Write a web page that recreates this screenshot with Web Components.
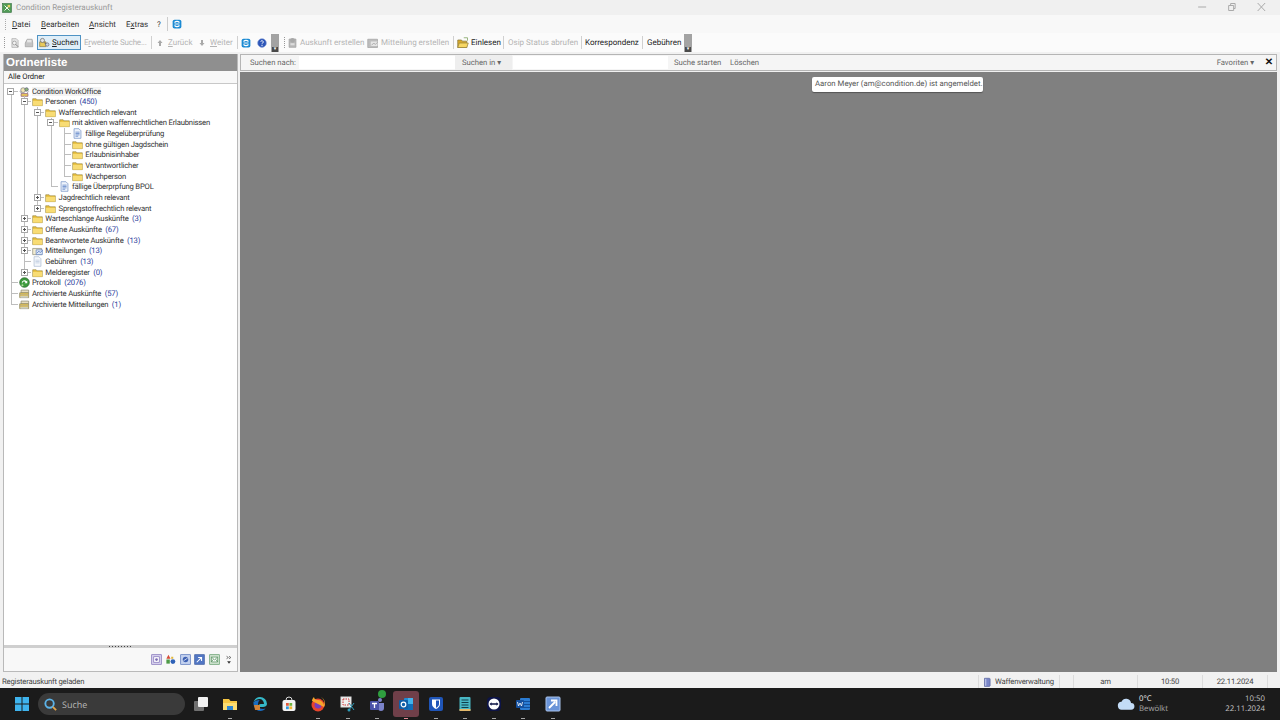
<!DOCTYPE html>
<html lang="de">
<head>
<meta charset="utf-8">
<title>Condition Registerauskunft</title>
<style>
  html, body { margin: 0; height: 720px; overflow: hidden; }
  body {
    display: flex; flex-direction: column; background: #f1f1f1; color: #333;
    font: 7.7px Roboto, "Open Sans", sans-serif;
    text-rendering: geometricPrecision;
  }
</style>
</head>
<body>
<title-bar>Condition Registerauskunft</title-bar>
<menu-bar></menu-bar>
<tool-bar></tool-bar>
<main-area></main-area>
<status-bar></status-bar>
<task-bar></task-bar>

<script>
(function () {
  const folder = `<path d="M1 4h5l1 1.500h8V14H1z" fill="#e8bf3c" stroke="#8a7a3c" stroke-width=".8"/><path d="M1.500 7h13.500v7H1.500z" fill="#f8dc74"/>`;
  const ICONS = {
    folder,
    app: `<rect x="1" y="1" width="14" height="14" fill="#4f9a55" stroke="#2f6f3a"/><path d="M4 4l8 8M12 4l-8 8" stroke="#fff" stroke-width="1.500"/><path d="M9 3h4v4H9z" fill="#e8d26a"/>`,
    doc: `<path d="M3 1h7l3 3v11H3z" fill="#eef3fb" stroke="#6f8fc4"/><path d="M5 6h6M5 8h6M5 10h6M5 12h4" stroke="#4a74c0"/>`,
    plain: `<path d="M3 1h7l3 3v11H3z" fill="#f4f7fb" stroke="#a9b9d0"/><path d="M5 6h6M5 8h6M5 10h6" stroke="#b7c6dc"/>`,
    mail: `<path d="M1 5h13v9H1z" fill="#f3ecd0" stroke="#8b8b7a"/><path d="M6 7h9v7H6z" fill="#dfe8f7" stroke="#5d7fbd"/><path d="M7 12l3-3 2 2 3-3" stroke="#3d66b5" fill="none"/>`,
    root: `<circle cx="6" cy="6" r="3.500" fill="#f1e7b6" stroke="#777"/><circle cx="11" cy="5" r="2.500" fill="#8fb878" stroke="#557"/><path d="M3 11h10v4H3z" fill="#e8c95a" stroke="#857"/><path d="M1 8l3 2M14 8l-2 2" stroke="#667"/>`,
    proto: `<circle cx="8" cy="8" r="7" fill="#3c9a3c" stroke="#26622a"/><path d="M4 9a4 4 0 0 1 7-3l1-1v4H8l1.500-1.500A2.500 2.500 0 0 0 5 9z" fill="#fff"/><circle cx="5" cy="12" r="1.500" fill="#b6e0a0"/>`,
    archive: `<path d="M3 3h11v4H3z" fill="#e7dfc3" stroke="#88846e"/><path d="M1 7h13v7H1z" fill="#e8c95a" stroke="#857f5a"/><path d="M1 10h13" stroke="#9a9a9a"/><path d="M2 12h11v2H2z" fill="#c9d0d8"/>`,
    preview: `<path d="M3 1h7l3 3v11H3z" fill="#e4e4e4" stroke="#a2a2a2"/><circle cx="7" cy="8" r="3" fill="#f4f4f4" stroke="#8a8a8a"/><path d="M9 10l4 4" stroke="#777" stroke-width="1.500"/>`,
    print: `<path d="M2 8l3-6h8l1 6v6H2z" fill="#c4c4c4" stroke="#999"/><path d="M5 3h7v4H5z" fill="#e7e7e7"/>`,
    search: `<path d="M1 7h9v7H1z" fill="#e8c95a" stroke="#8a7a3c"/><circle cx="5" cy="5" r="3" fill="#e3e3e3" stroke="#666"/><path d="M8 8l3 3" stroke="#555" stroke-width="1.500"/><circle cx="12" cy="11" r="2.500" fill="#c9d3df" stroke="#667"/>`,
    up: `<path d="M8 2l5 6h-3v6H6V8H3z" fill="#a9a9a9"/>`,
    down: `<path d="M8 14l5-6h-3V2H6v6H3z" fill="#a9a9a9"/>`,
    tv: `<rect x="1" y="1" width="14" height="14" rx="3" fill="#1b8ad3"/><path d="M4 5.500A6 6 0 0 1 12 5.500M4 10.500A6 6 0 0 0 12 10.500" stroke="#fff" stroke-width="2" fill="none"/><path d="M4 8h8" stroke="#fff" stroke-width="1.500"/>`,
    help: `<circle cx="8" cy="8" r="7" fill="#2d56b8" stroke="#8aa2d8"/><path d="M6 6a2 2 0 1 1 3 2c-1 .5-1 1-1 2" stroke="#fff" stroke-width="1.500" fill="none"/><circle cx="8" cy="12" r="1" fill="#fff"/>`,
    report: `<path d="M3 3h10v12H3z" fill="#b9b9b9" stroke="#a0a0a0"/><circle cx="8" cy="5" r="3.500" fill="#a8a8a8"/><path d="M5 9h6v3H5z" fill="#dcdcdc"/>`,
    message: `<path d="M1 3h13v11H1z" fill="#bdbdbd" stroke="#a4a4a4"/><path d="M5 6h9v6H5z" fill="#e6e6e6"/><path d="M6 11l3-3 2 2 3-3" stroke="#999" fill="none"/>`,
    open: `<path d="M1 4h5l1 1.500h6V14H1z" fill="#d9a928" stroke="#8a7a3c"/><path d="M3 8h12l-2 6H1z" fill="#f7d764" stroke="#9a853c"/><path d="M9 1h5v4" stroke="#7a9f58" fill="none"/>`,
    disk: `<path d="M4 2h8l1 1v11l-1 1H4z" fill="#7a86c8" stroke="#4f5a96"/><path d="M6 3v11" stroke="#cdd3f0" stroke-width="1.500"/>`,
    b1: `<rect x="1" y="1" width="14" height="14" fill="#d8d2ee" stroke="#7d6db5"/><rect x="4" y="4" width="8" height="8" fill="#fff" stroke="#7d6db5"/><circle cx="8" cy="8" r="2" fill="#7d6db5"/>`,
    b2: `<path d="M5 1l3 6H2z" fill="#d64b36"/><rect x="2" y="8" width="5" height="6" fill="#4f9a48"/><circle cx="11.500" cy="11" r="3.500" fill="#2f62b8"/><path d="M9 4h3v3H9z" fill="#e2b93c"/>`,
    b3: `<rect x="1" y="1" width="14" height="14" fill="#c4d2ef" stroke="#4f6fb8"/><circle cx="8" cy="8" r="4" fill="#3f62b3"/><path d="M5 10l6-4" stroke="#fff"/>`,
    b4: `<rect x="1" y="1" width="14" height="14" fill="#5277c4" stroke="#3c5aa0"/><path d="M4 12l6-6M6 5h5v5" stroke="#fff" stroke-width="1.500" fill="none"/>`,
    b5: `<rect x="1" y="1" width="14" height="14" fill="#cfe3cf" stroke="#5d9a66"/><path d="M3.500 4.500h9v7h-9z" fill="#fff" stroke="#4d8a56"/><path d="M3.500 4.500l4.500 4 4.500-4M3.500 11.500l3-4M12.500 11.500l-3-4" stroke="#4d8a56" fill="none"/>`,
    chev: `<path d="M4 2l3 2-3 2M8 2l3 2-3 2" fill="none" stroke="#333"/><path d="M5 10h6l-3 4z" fill="#333"/>`,
    win: `<path d="M1 1h6.500v6.500H1zM8.500 1H15v6.500H8.500zM1 8.500h6.500V15H1zM8.500 8.500H15V15H8.500z" fill="#3fb4ee"/>`,
    lens: `<circle cx="7" cy="7" r="4.500" fill="none" stroke="#5cb3e8" stroke-width="2"/><path d="M10.500 10.500l3.500 3.500" stroke="#e0a24a" stroke-width="2"/>`,
    taskview: `<rect x="1" y="5" width="10" height="10" rx="1" fill="#707070"/><rect x="5" y="1" width="10" height="10" rx="1" fill="#f1f1f1"/>`,
    explorer: `<path d="M1 3h6l1.500 2H15v9H1z" fill="#f5c542"/><path d="M1 7h14v7H1z" fill="#fbdc71"/><path d="M5 10h6v4H5z" fill="#2f86d0"/>`,
    edge: `<path d="M8 1a7 7 0 0 1 7 7c0 2-2 3-4 3H6c0-2 1-3 3-3h3C12 5 10 3 7.500 3 5 3 2.500 5 1.500 6 2.500 3 5 1 8 1z" fill="#35b8c8"/><path d="M1.500 6C1 10 3.500 15 8.500 15c2 0 4-1 5-2.500-3 1-7 .5-7.500-4C6 6 7 4.500 8 4 5 4 2.500 5 1.500 6z" fill="#1a6cc0"/><path d="M2 9h6v5H3z" fill="#e8862a" opacity=".9"/>`,
    store: `<path d="M5 4a3 3 0 0 1 6 0" fill="none" stroke="#dcdcdc"/><rect x="1.500" y="4" width="13" height="11" rx="2" fill="#f4f4f4"/><path d="M5 7h2.800v2.800H5z" fill="#e25a3c"/><path d="M8.400 7h2.800v2.800H8.400z" fill="#6eb43f"/><path d="M5 10.400h2.800v2.800H5z" fill="#2f9ae0"/><path d="M8.400 10.400h2.800v2.800H8.400z" fill="#f2b632"/>`,
    firefox: `<circle cx="8" cy="9" r="6.500" fill="#e8452c"/><circle cx="8" cy="9" r="3.500" fill="#7a3fb8"/><path d="M2 5c0-2 1-3 2-4 0 2 2 3 4 3 3 0 5 2 6 5 1-3 0-6-3-8 4 2 5 7 3 10L8 8z" fill="#f7a52c"/>`,
    snip: `<rect x="1" y="1" width="10" height="10" fill="#f1f1f1" stroke="#ddd"/><path d="M3 3h6v6H3z" fill="none" stroke="#c33" stroke-dasharray="1.500 1"/><path d="M9 7l5 7M14 7l-5 7" stroke="#2c9bb8"/><circle cx="9" cy="14" r="1.500" fill="#2c9bb8"/>`,
    teams: `<circle cx="11" cy="4" r="2" fill="#7b83c9"/><path d="M8 7h7v5a3 3 0 0 1-6 0z" fill="#7b83c9"/><rect x="1" y="5" width="9" height="9" rx="1" fill="#4b53a8"/><path d="M3 7.500h5M5.500 7.500V12" stroke="#fff" stroke-width="1.300"/>`,
    outlook: `<rect x="6" y="2" width="9" height="12" rx="1" fill="#1d8ad6"/><path d="M10 2h5v6h-5z" fill="#41b2ec"/><path d="M6 8h9v6H6z" fill="#0f6cb8"/><rect x="1" y="4" width="9" height="9" rx="1" fill="#0f5ea8"/><circle cx="5.500" cy="8.500" r="2.300" fill="none" stroke="#fff" stroke-width="1.200"/>`,
    bitwarden: `<rect x="1" y="1" width="14" height="14" rx="2" fill="#1f55b8"/><path d="M4 3.500h8V8c0 2.500-2 4-4 5-2-1-4-2.500-4-5z" fill="#fff"/><path d="M8 4.500h3V8c0 2-1.500 3-3 3.800z" fill="#1f55b8"/>`,
    notepad: `<rect x="2.500" y="1" width="11" height="14" rx="1" fill="#49b7c4"/><path d="M4.500 4h7M4.500 6.500h7M4.500 9h7M4.500 11.500h7" stroke="#123d4a"/><path d="M2.500 13h11v2h-11z" fill="#e2b86c"/>`,
    teamviewer: `<rect x="1" y="1" width="14" height="14" rx="4" fill="#0d1446"/><circle cx="8" cy="8" r="5.500" fill="#fff"/><path d="M3.500 8l2-1.800v1h5v-1l2 1.800-2 1.800v-1h-5v1z" fill="#0d1446"/>`,
    word: `<rect x="5" y="2" width="10" height="12" rx="1" fill="#2b7cd3"/><path d="M5 5.500h10M5 8.500h10M5 11.500h10" stroke="#134f9a"/><rect x="1" y="4" width="8" height="8" rx="1" fill="#14509f"/><path d="M2.500 6l1 4 1.500-3 1.500 3 1-4" stroke="#fff" fill="none" stroke-width=".8"/>`,
    remote: `<rect x="1" y="1" width="14" height="14" rx="1" fill="#6a94d8" stroke="#aac4ec"/><path d="M4 12l6-6M6 4.500h5.500V10" stroke="#fff" stroke-width="1.800" fill="none"/>`,
    cloud: `<path d="M4.500 13a3.500 3.500 0 0 1-.5-7 4.500 4.500 0 0 1 8.500 1 3 3 0 0 1 0 6z" fill="#c3dcf7"/>`
  };

  class AppIcon extends HTMLElement {
    connectedCallback() {
      if (this.shadowRoot) return;
      const size = this.getAttribute("size") || 10;
      const shadow = this.attachShadow({ mode: "open" });
      shadow.innerHTML = `
        <style>
          :host { display: inline-flex; flex: none; width: ${size}px; height: ${size}px; }
          svg { display: block; width: 100%; height: 100%; }
        </style>
        <svg viewBox="0 0 16 16">${ICONS[this.getAttribute("name")] || ""}</svg>`;
    }
  }

  class TitleBar extends HTMLElement {
    constructor() {
      super();
      this.attachShadow({ mode: "open" }).innerHTML = `
        <style>
          :host { display: flex; align-items: center; flex: none; height: 15px; padding-left: 2px; background: #f0f0f0; color: #9a9a9a; font-size: 8px; }
          span { margin-left: 4px; flex: 1; }
          .ctl { display: flex; }
          .ctl svg { width: 29.300px; height: 10px; margin-top: -1px; }
        </style>
        <app-icon name="app" size="10"></app-icon>
        <span><slot></slot></span>
        <div class="ctl">
          <svg viewBox="0 0 29 10"><path d="M10 5h8" stroke="#aaa"/></svg>
          <svg viewBox="0 0 29 10"><path d="M11.500 3.500h5v5h-5zM13.500 3.500v-2h4.500v5h-1.500" fill="none" stroke="#aaa"/></svg>
          <svg viewBox="0 0 29 10" style="margin-right:4px"><path d="M10.500 1l7.500 8M18 1l-7.500 8" stroke="#aaa"/></svg>
        </div>`;
    }
  }

  class MenuBar extends HTMLElement {
    constructor() {
      super();
      this.attachShadow({ mode: "open" }).innerHTML = `
        <style>
          :host { display: flex; align-items: center; flex: none; height: 18px; padding-left: 5px; background: #f8f8f8; color: #333; font-size: 8px; }
          i { width: 1px; height: 11px; margin-right: 6px; border-left: 1px dotted #aaa; box-sizing: border-box; }
          span { display: block; }
          u { text-decoration-thickness: 1px; }
          .sep { width: 1px; height: 14px; background: #ccc; margin: 0 4px; }
        </style>
        <i></i>
        <span style="width:29px"><u>D</u>atei</span>
        <span style="width:48px"><u>B</u>earbeiten</span>
        <span style="width:37px"><u>A</u>nsicht</span>
        <span style="width:31px">E<u>x</u>tras</span>
        <span style="width:6px">?</span>
        <div class="sep"></div>
        <app-icon name="tv" size="10"></app-icon>`;
    }
  }

  class ToolBtn extends HTMLElement {
    connectedCallback() {
      if (this.shadowRoot) return;
      const icon = this.getAttribute("icon");
      const shadow = this.attachShadow({ mode: "open" });
      shadow.innerHTML = `
        <style>
          :host { display: flex; align-items: center; flex: none; height: 15px; white-space: nowrap; color: #b4b4b4; font-size: 8px; }
          :host([on]) { color: #222; }
          :host([active]) { box-sizing: border-box; padding-left: 2px; color: #222; background: #dfeef8; outline: 1px solid #4f93c4; outline-offset: -1px; }
          app-icon { margin-right: 2px; }
        </style>
        ${icon ? `<app-icon name="${icon}" size="${this.getAttribute("size") || 10}"></app-icon>` : ""}
        <slot></slot>`;
    }
  }

  class ToolBar extends HTMLElement {
    constructor() {
      super();
      this.attachShadow({ mode: "open" }).innerHTML = `
        <style>
          :host { display: flex; align-items: center; flex: none; height: 19px; background: #fbfbfb; padding-left: 4px; box-sizing: border-box; }
          i { flex: none; width: 0; height: 11px; border-left: 1px dotted #999; }
          b { flex: none; width: 1px; height: 13px; background: #d0d0d0; }
          .more { flex: none; display: flex; align-items: flex-end; justify-content: center; width: 8px; height: 18px; background: #a3a3a3; }
          .more span { width: 6px; height: 5px; background: #4a4a4a; color: #fff; font-size: 5px; line-height: 5px; text-align: center; }
        </style>
        <i></i>
        <tool-btn icon="preview" style="margin-left:5px;width:14px"></tool-btn>
        <tool-btn icon="print" style="width:13px"></tool-btn>
        <tool-btn icon="search" size="11" active style="width:44px"><u>S</u>uchen</tool-btn>
        <tool-btn style="margin-left:3px;width:64px;letter-spacing:-.2px">E<u>r</u>weiterte Suche...</tool-btn>
        <b style="margin:0 3px"></b>
        <tool-btn icon="up" size="8" style="margin-left:1px;width:39px"><span style="margin-left:2px"><u>Z</u>urück</span></tool-btn>
        <tool-btn icon="down" size="8" style="margin-left:3px;width:35px"><span style="margin-left:2px"><u>W</u>eiter</span></tool-btn>
        <b style="margin:0 3px 0 4px"></b>
        <tool-btn icon="tv" style="width:16px"></tool-btn>
        <tool-btn icon="help" style="width:14px"></tool-btn>
        <div class="more"><span>▾</span></div>
        <i style="margin-left:5px"></i>
        <tool-btn icon="report" size="11" style="margin-left:2px;width:78px">Auskunft erstellen</tool-btn>
        <tool-btn icon="message" size="12" style="margin-left:2px;width:84px">Mitteilung erstellen</tool-btn>
        <b style="margin:0 3px 0 2px"></b>
        <tool-btn icon="open" size="12" on style="width:44px">Einlesen</tool-btn>
        <b style="margin:0 4px 0 2px"></b>
        <tool-btn style="width:72px">Osip Status abrufen</tool-btn>
        <b style="margin:0 3px 0 1px"></b>
        <tool-btn on style="width:57px">Korrespondenz</tool-btn>
        <b style="margin-right:4px"></b>
        <tool-btn on style="width:37px">Gebühren</tool-btn>
        <div class="more"><span>▾</span></div>`;
    }
  }

  const TREE = [
    { label: "Condition WorkOffice", icon: "root", hi: true, open: true, children: [
      { label: "Personen", count: 450, icon: "folder", open: true, children: [
        { label: "Waffenrechtlich relevant", icon: "folder", open: true, children: [
          { label: "mit aktiven waffenrechtlichen Erlaubnissen", icon: "folder", open: true, children: [
            { label: "fällige Regelüberprüfung", icon: "doc" },
            { label: "ohne gültigen Jagdschein", icon: "folder" },
            { label: "Erlaubnisinhaber", icon: "folder" },
            { label: "Verantwortlicher", icon: "folder" },
            { label: "Wachperson", icon: "folder" }
          ] },
          { label: "fällige Überprpfung BPOL", icon: "doc" }
        ] },
        { label: "Jagdrechtlich relevant", icon: "folder", closed: true },
        { label: "Sprengstoffrechtlich relevant", icon: "folder", closed: true }
      ] },
      { label: "Warteschlange Auskünfte", count: 3, icon: "folder", closed: true },
      { label: "Offene Auskünfte", count: 67, icon: "folder", closed: true },
      { label: "Beantwortete Auskünfte", count: 13, icon: "folder", closed: true },
      { label: "Mitteilungen", count: 13, icon: "mail", closed: true },
      { label: "Gebühren", count: 13, icon: "plain" },
      { label: "Melderegister", count: 0, icon: "folder", closed: true }
    ] },
    { label: "Protokoll", count: 2076, icon: "proto" },
    { label: "Archivierte Auskünfte", count: 57, icon: "archive" },
    { label: "Archivierte Mitteilungen", count: 1, icon: "archive" }
  ];

  class FolderTree extends HTMLElement {
    constructor() {
      super();
      const rows = [];
      // prefix holds one flag per ancestor level: does its line carry on below
      const walk = (nodes, prefix, top) => {
        nodes.forEach((node, i) => {
          const last = i === nodes.length - 1;
          const guides = prefix.map((on) => `<span class="c ${on ? "v" : ""}"></span>`).join("");
          const kind = top && i === 0 ? "first" : last ? "elbow" : "tee";
          const box = node.open ? `<em class="minus"></em>` : node.closed ? `<em class="plus"></em>` : "";
          const count = node.count !== undefined ? `<span class="n">(${node.count})</span>` : "";
          rows.push(`<div class="r">${guides}<span class="c ${kind}">${box}</span>
            <span class="c ic"><app-icon name="${node.icon}" size="11"></app-icon></span>
            <span class="t ${node.hi ? "hi" : ""}">${node.label}</span>${count}</div>`);
          if (node.children) walk(node.children, prefix.concat(!last), false);
        });
      };
      walk(TREE, [], true);
      this.attachShadow({ mode: "open" }).innerHTML = `
        <style>
          :host { display: block; flex: 1; background: #fff; padding: 1.700px 0 0 .800px; overflow: hidden; letter-spacing: -.2px; --l: #bdbdbd; }
          .r { display: flex; align-items: center; height: 10.670px; white-space: nowrap; }
          .c { flex: none; display: flex; align-items: center; justify-content: center; width: 13.330px; height: 100%; background-repeat: no-repeat; }
          .ic app-icon { margin-left: -1px; }
          .v { background-image: linear-gradient(var(--l), var(--l)); background-size: 1px 100%; background-position: 6px 0; }
          .tee { background-image: linear-gradient(var(--l), var(--l)), linear-gradient(var(--l), var(--l)); background-size: 1px 100%, 7px 1px; background-position: 6px 0, 6px 50%; }
          .elbow { background-image: linear-gradient(var(--l), var(--l)), linear-gradient(var(--l), var(--l)); background-size: 1px 50%, 7px 1px; background-position: 6px 0, 6px 50%; }
          .first { background-image: linear-gradient(var(--l), var(--l)), linear-gradient(var(--l), var(--l)); background-size: 1px 50%, 7px 1px; background-position: 6px 100%, 6px 50%; }
          em { display: block; box-sizing: border-box; width: 7px; height: 7px; margin-left: -1px; border: 1px solid #a8a8a8; background-color: #fff; background-repeat: no-repeat; background-image: linear-gradient(#555, #555); background-size: 3px 1px; background-position: center; }
          em.plus { background-image: linear-gradient(#555, #555), linear-gradient(#555, #555); background-size: 3px 1px, 1px 3px; }
          .t { margin-left: .500px; color: #333; }
          .hi { background: #f4f4f4; }
          .n { margin-left: 3.500px; color: #2f3f9e; }
        </style>
        ${rows.join("")}`;
    }
  }

  class FolderPanel extends HTMLElement {
    constructor() {
      super();
      this.attachShadow({ mode: "open" }).innerHTML = `
        <style>
          :host { display: flex; flex-direction: column; flex: none; width: 235px; box-sizing: border-box; border: 1px solid #b9b9b9; border-top: 0; }
          h2 { margin: 0; height: 17px; padding-left: 2px; background: #8f8f8f; color: #fff; font: bold 11.500px/18px "Liberation Sans", sans-serif; }
          .all { height: 12px; line-height: 12px; padding-left: 4px; background: #f8f8f8; border-bottom: 1px solid #c8c8c8; color: #222; letter-spacing: -.1px; }
          .grip { display: flex; justify-content: center; align-items: center; height: 3px; background: #cfcfcf; }
          .grip span { width: 23px; height: 1px; background: repeating-linear-gradient(90deg, #444 0 1px, transparent 1px 3px); }
          .foot { display: flex; align-items: center; justify-content: flex-end; height: 23px; gap: 3.500px; background: #f8f8f8; padding-right: 3px; }
        </style>
        <h2>Ordnerliste</h2>
        <div class="all">Alle Ordner</div>
        <folder-tree></folder-tree>
        <div class="grip"><span></span></div>
        <div class="foot">
          <app-icon name="b1" size="11"></app-icon>
          <app-icon name="b2" size="11"></app-icon>
          <app-icon name="b3" size="11"></app-icon>
          <app-icon name="b4" size="11"></app-icon>
          <app-icon name="b5" size="11"></app-icon>
          <app-icon name="chev" size="10" style="margin-left:1px"></app-icon>
        </div>`;
    }
  }

  class SearchBar extends HTMLElement {
    constructor() {
      super();
      this.attachShadow({ mode: "open" }).innerHTML = `
        <style>
          :host { display: flex; align-items: center; flex: none; height: 17px; box-sizing: border-box; border: 1px solid #b5b5b5; background: #f5f5f5; color: #666; white-space: nowrap; font-size: 7.700px; }
          .box { flex: none; height: 13px; background: #fff; }
          span { flex: none; }
          .in { width: 57px; height: 15px; line-height: 15px; text-align: center; background: #eeeeee; box-sizing: border-box; padding-right: 4px; }
          .x { width: 14px; text-align: center; color: #111; font: bold 10px "Liberation Sans", sans-serif; }
        </style>
        <span style="margin-left:9px;width:49px">Suchen nach:</span>
        <div class="box" style="width:156px"></div>
        <span class="in">Suchen in ▾</span>
        <div class="box" style="margin-left:1px;width:155px"></div>
        <span style="margin-left:6px;width:56px">Suche starten</span>
        <span>Löschen</span>
        <span style="margin-left:auto">Favoriten ▾</span>
        <span class="x" style="margin-left:8px">✕</span>`;
    }
  }

  class WorkPane extends HTMLElement {
    constructor() {
      super();
      this.attachShadow({ mode: "open" }).innerHTML = `
        <style>
          :host { display: flex; flex-direction: column; flex: 1; gap: 1px; min-width: 0; }
          .canvas { position: relative; flex: 1; background: #808080; }
          .tip { position: absolute; left: 572px; top: 5px; height: 15px; width: 171px; box-sizing: border-box; padding-left: 3px; line-height: 14px; background: #fff; border-radius: 2px; color: #555; font-size: 7.800px; white-space: nowrap; box-shadow: 0 1px 1px #555; }
        </style>
        <search-bar></search-bar>
        <div class="canvas"><div class="tip">Aaron Meyer (am@condition.de) ist angemeldet.</div></div>`;
    }
  }

  class MainArea extends HTMLElement {
    constructor() {
      super();
      this.attachShadow({ mode: "open" }).innerHTML = `
        <style>
          :host { display: flex; flex: none; height: 618px; margin-top: 2px; padding: 0 3px; gap: 2px; box-sizing: border-box; }
        </style>
        <folder-panel></folder-panel>
        <work-pane></work-pane>`;
    }
  }

  class StatusBar extends HTMLElement {
    constructor() {
      super();
      this.attachShadow({ mode: "open" }).innerHTML = `
        <style>
          :host { display: flex; align-items: center; flex: none; box-sizing: border-box; height: 16px; padding: 3px 0 0 2px; background: #f1f1f1; color: #444; white-space: nowrap; font-size: 7.700px; letter-spacing: -.2px; }
          .msg { flex: 1; }
          .cell { display: flex; align-items: center; justify-content: center; height: 100%; box-sizing: border-box; border-left: 1px solid #dcdcdc; }
        </style>
        <span class="msg">Registerauskunft geladen</span>
        <div class="cell" style="width:81px;gap:3px;justify-content:flex-start;padding-left:3px"><app-icon name="disk" size="10"></app-icon>Waffenverwaltung</div>
        <div class="cell" style="width:14px"></div>
        <div class="cell" style="width:64px">am</div>
        <div class="cell" style="width:65px">10:50</div>
        <div class="cell" style="width:65px">22.11.2024</div>
        <div class="cell" style="width:13px"></div>`;
    }
  }

  class TaskApp extends HTMLElement {
    connectedCallback() {
      if (this.shadowRoot) return;
      const shadow = this.attachShadow({ mode: "open" });
      shadow.innerHTML = `
        <style>
          :host { display: flex; flex-direction: column; align-items: center; flex: none; width: 29.300px; height: 32px; box-sizing: border-box; }
          .tile { display: flex; align-items: center; justify-content: center; width: 26px; height: 26px; margin-top: 3px; border-radius: 3px; }
          :host([active]) .tile { background: #6f3f49; }
          .dot { width: 4px; height: 1px; margin-top: 1px; }
          :host([run]) .dot { background: #a8a8a8; }
          :host([active]) .dot { background: #e58a96; }
        </style>
        <div class="tile"><app-icon name="${this.getAttribute("name")}" size="16"></app-icon></div>
        <div class="dot"></div>`;
    }
  }

  class TaskBar extends HTMLElement {
    constructor() {
      super();
      const apps = [
        ["taskview", ""], ["explorer", "run"], ["edge", ""], ["store", ""], ["firefox", "run"],
        ["snip", "run"], ["teams", "run"], ["outlook", "active"], ["bitwarden", "run"],
        ["notepad", "run"], ["teamviewer", "run"], ["word", "run"], ["remote", "run"]
      ];
      this.attachShadow({ mode: "open" }).innerHTML = `
        <style>
          :host { display: flex; align-items: center; flex: none; height: 32px; background: #1b1b1b; color: #ccc; white-space: nowrap; font: 7.800px "Open Sans", sans-serif; }
          .start { margin-left: 14px; }
          .search { display: flex; align-items: center; box-sizing: border-box; width: 147px; height: 22px; margin-left: 8px; padding-left: 5px; gap: 4px; border-radius: 11px; background: #3a3a3a; font-size: 9px; color: #b9b9b9; }
          .apps { display: flex; margin-left: 1.500px; }
          .badge { position: relative; }
          .badge::after { content: ""; position: absolute; left: 16px; top: 2px; width: 8px; height: 8px; border-radius: 50%; background: #2f9e3f; }
          .weather { display: flex; align-items: center; gap: 4px; margin-left: auto; }
          .lines { line-height: 10px; }
          .lines b { display: block; font-weight: 400; color: #eee; }
          .lines span { color: #a9a9a9; }
          .clock { width: 60px; margin: 0 15px 0 37px; text-align: right; line-height: 10px; color: #c4c4c4; }
        </style>
        <app-icon class="start" name="win" size="16"></app-icon>
        <div class="search"><app-icon name="lens" size="15"></app-icon>Suche</div>
        <div class="apps">
          ${apps.map(([n, s]) => `<task-app name="${n}" ${s} ${n === "teams" ? 'class="badge"' : ""}></task-app>`).join("")}
        </div>
        <div class="weather">
          <app-icon name="cloud" size="18"></app-icon>
          <div class="lines"><b>0°C</b><span>Bewölkt</span></div>
        </div>
        <div class="clock">10:50<br>22.11.2024</div>`;
    }
  }

  customElements.define("app-icon", AppIcon);
  customElements.define("title-bar", TitleBar);
  customElements.define("menu-bar", MenuBar);
  customElements.define("tool-btn", ToolBtn);
  customElements.define("tool-bar", ToolBar);
  customElements.define("folder-tree", FolderTree);
  customElements.define("folder-panel", FolderPanel);
  customElements.define("search-bar", SearchBar);
  customElements.define("work-pane", WorkPane);
  customElements.define("main-area", MainArea);
  customElements.define("status-bar", StatusBar);
  customElements.define("task-app", TaskApp);
  customElements.define("task-bar", TaskBar);
})();
</script>
</body>
</html>
